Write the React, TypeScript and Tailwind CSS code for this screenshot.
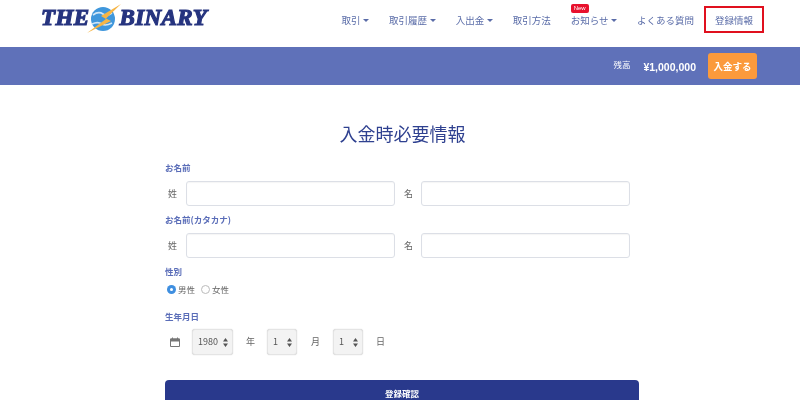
import React from "react";

const font = { fontFamily: '"Noto Sans CJK JP", "Liberation Sans", sans-serif' };

function Caret() {
  return <span className="ml-[2.5px] inline-block w-0 h-0 border-x-[3px] border-x-transparent border-t-[3px] border-t-[#5a6ca8] translate-y-[1px]" />;
}

function NavItem({ label, caret, boxed, badge }: { label: string; caret?: boolean; boxed?: boolean; badge?: boolean }) {
  return (
    <div className={"relative flex items-center h-[27px] text-[9.5px] text-[#5a6ca8] " + (boxed ? "border-2 border-[#e0101e] px-[9px]" : "px-[10px]")}>
      {badge && (
        <span className="absolute left-[10px] top-[-2px] w-[18px] h-[9px] rounded-[2px] bg-[#e8112d] text-white text-[6px] leading-[9px] text-center" style={{ fontFamily: '"Liberation Sans", sans-serif' }}>New</span>
      )}
      <span className="translate-y-[1px]">{label}</span>
      {caret && <Caret />}
    </div>
  );
}

function Logo() {
  return (
    <div className="flex items-center h-[30px] text-[#26347f] text-[23px] font-bold italic tracking-[0.4px]" style={{ fontFamily: '"Liberation Serif", serif', WebkitTextStroke: "1.2px #26347f" }}>
      <span>THE</span>
      <svg width="36" height="30" viewBox="0 0 36 30" className="mx-[-3px] shrink-0">
        <circle cx="17" cy="16" r="12" fill="#3f97dc" />
        <path d="M7 12c4-3 7-3 10-1s6 1 9-1M6 21c4-2 7-2 10 0s6 1 10-1" stroke="#cfe6f7" strokeWidth="1.6" fill="none" />
        <path d="M35 1 L15 13 L20 16 L1 30 L25 18 L20 15.500 Z" fill="#f6b545" />
      </svg>
      <span>BINARY</span>
    </div>
  );
}

function Label({ children, className = "" }: { children: React.ReactNode; className?: string }) {
  return <div className={"text-[8.5px] leading-[12px] font-bold text-[#5a6db8] " + className}>{children}</div>;
}

function NameRow({ a, b }: { a: string; b: string }) {
  const input = "w-[209px] h-[25px] rounded-[3px] border border-[#dcdfe6] bg-white shadow-[inset_0_1px_1px_rgba(0,0,0,0.04)]";
  return (
    <div className="flex items-center text-[9px] text-[#666]">
      <span className="w-[21px] pl-[3px]">{a}</span>
      <input className={input} />
      <span className="w-[26px] pl-[9px]">{b}</span>
      <input className={input} />
    </div>
  );
}

function YearSelect({ value, width }: { value: string; width: string }) {
  return (
    <div className={"relative flex items-center h-[26px] rounded-[3px] border border-[#e4e4e4] bg-[#f3f3f3] pl-[5px] text-[9px] text-[#555] shadow-[0_0_1px_rgba(0,0,0,0.25)] " + width}>
      <span>{value}</span>
      <svg width="5" height="9" viewBox="0 0 5 9" className="absolute right-[4px] top-[8px]">
        <path d="M2.500 0 L5 3.500 H0 Z M2.500 9 L0 5.500 H5 Z" fill="#555" />
      </svg>
    </div>
  );
}

function Radio({ on, label }: { on?: boolean; label: string }) {
  return (
    <div className="flex items-center gap-[2px] text-[8.5px] text-[#666]">
      <span className={"flex items-center justify-center w-[9px] h-[9px] rounded-full " + (on ? "bg-[#3f8fe0]" : "border border-[#bbb] bg-white")}>
        {on && <span className="w-[3px] h-[3px] rounded-full bg-white" />}
      </span>
      <span>{label}</span>
    </div>
  );
}

export default function App() {
  return (
    <div className="w-[800px] h-[400px] overflow-hidden bg-white flex flex-col blur-[0.4px]" style={font}>
      <header className="h-[47px] flex items-start justify-between pl-[41px] pr-[36px] shrink-0">
        <div className="pt-[3px]"><Logo /></div>
        <nav className="flex items-center pt-[6px]">
          <NavItem label="取引" caret />
          <NavItem label="取引履歴" caret />
          <NavItem label="入出金" caret />
          <NavItem label="取引方法" />
          <NavItem label="お知らせ" caret badge />
          <NavItem label="よくある質問" />
          <NavItem label="登録情報" boxed />
        </nav>
      </header>

      <div className="h-[38px] shrink-0 bg-[#5f71b9] flex items-center justify-end pr-[43px] text-white">
        <span className="text-[8.5px] mr-[13px] translate-y-[-2px]">残高</span>
        <span className="text-[10.5px] font-bold mr-[12px] translate-y-[2px]" style={{ fontFamily: '"Liberation Sans", sans-serif' }}>¥1,000,000</span>
        <button className="w-[49px] h-[26px] rounded-[3px] bg-[#fb9a3c] text-[9.5px] font-bold text-white">入金する</button>
      </div>

      <main className="flex-1 flex flex-col items-center">
        <h1 className="mt-[35px] ml-[5px] h-[26px] leading-[26px] text-[18px] text-[#2f4190]">入金時必要情報</h1>
        <form className="w-[474px] mt-[1px] ml-[4px]">
          <Label className="mt-[14px]">お名前</Label>
          <div className="mt-[8px]"><NameRow a="姓" b="名" /></div>
          <Label className="mt-[7px]">お名前(カタカナ)</Label>
          <div className="mt-[8px]"><NameRow a="姓" b="名" /></div>
          <Label className="mt-[7px]">性別</Label>
          <div className="mt-[6px] ml-[2px] flex items-center gap-[6px] h-[12px]">
            <Radio on label="男性" />
            <Radio label="女性" />
          </div>
          <Label className="mt-[15px]">生年月日</Label>
          <div className="mt-[7px] flex items-center text-[9px] text-[#666]">
            <svg width="10" height="10" viewBox="0 0 10 10" className="ml-[5px] mr-[12px]">
              <path d="M0.500 2 H9.500 V9.500 H0.500 Z" fill="none" stroke="#777" />
              <path d="M0.500 2 H9.500 V4 H0.500 Z M2.500 0.500 V2 M7.500 0.500 V2" fill="#777" stroke="#777" />
            </svg>
            <YearSelect value="1980" width="w-[41px]" />
            <span className="ml-[13px] w-[21px]">年</span>
            <YearSelect value="1" width="w-[30px]" />
            <span className="ml-[14px] w-[22px]">月</span>
            <YearSelect value="1" width="w-[30px]" />
            <span className="ml-[13px]">日</span>
          </div>
          <button type="button" className="block w-full h-[36px] mt-[25px] rounded-[4px] bg-[#29398c] text-white text-[8.5px] font-bold pb-[10px]">登録確認</button>
        </form>
      </main>
    </div>
  );
}
